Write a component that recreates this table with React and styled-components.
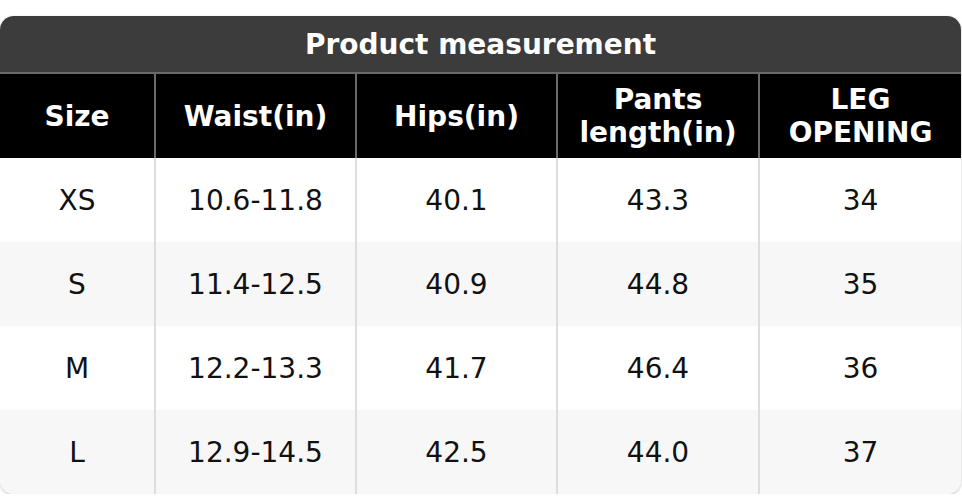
import React from "react";
import styled, { createGlobalStyle } from "styled-components";

const GlobalStyle = createGlobalStyle`
  body {
    margin: 0;
    background: #ffffff;
    font-family: "DejaVu Sans", "Liberation Sans", sans-serif;
  }
`;

const Card = styled.div`
  margin: 16px 1px 0 0;
  border-radius: 14px;
  overflow: hidden;
  background: #ffffff;
  box-shadow: 0 1px 3px rgba(0, 0, 0, 0.25);
`;

const Title = styled.div`
  height: 56px;
  display: flex;
  align-items: center;
  justify-content: center;
  background: #3c3c3c;
  color: #ffffff;
  font-weight: bold;
  font-size: 28px;
  border-bottom: 2px solid #6a6a6a;
`;

const Grid = styled.div`
  display: grid;
  grid-template-columns: 156px 201px 201px 202px 1fr;
`;

const HeadCell = styled.div`
  height: 84px;
  display: flex;
  align-items: center;
  justify-content: center;
  text-align: center;
  background: #000000;
  color: #ffffff;
  font-weight: bold;
  font-size: 28px;
  line-height: 33px;
  border-right: ${(p) => (p.$last ? "none" : "2px solid #6a6a6a")};
`;

const Cell = styled.div`
  height: 84px;
  display: flex;
  align-items: center;
  justify-content: center;
  background: ${(p) => (p.$alt ? "#f7f7f7" : "#ffffff")};
  color: #111111;
  font-size: 28px;
  border-right: ${(p) => (p.$last ? "none" : "2px solid #dddddd")};
`;

const headers = [
  ["Size"],
  ["Waist(in)"],
  ["Hips(in)"],
  ["Pants", "length(in)"],
  ["LEG", "OPENING"],
];

const rows = [
  ["XS", "10.6-11.8", "40.1", "43.3", "34"],
  ["S", "11.4-12.5", "40.9", "44.8", "35"],
  ["M", "12.2-13.3", "41.7", "46.4", "36"],
  ["L", "12.9-14.5", "42.5", "44.0", "37"],
];

export default function App() {
  return (
    <>
      <GlobalStyle />
      <Card>
        <Title>Product measurement</Title>
        <Grid>
          {headers.map((h, i) => (
            <HeadCell key={i} $last={i === headers.length - 1}>
              <div>
                {h.map((line, j) => (
                  <div key={j}>{line}</div>
                ))}
              </div>
            </HeadCell>
          ))}
          {rows.map((row, r) =>
            row.map((v, c) => (
              <Cell key={r + "-" + c} $alt={r % 2 === 1} $last={c === row.length - 1}>
                {v}
              </Cell>
            ))
          )}
        </Grid>
      </Card>
    </>
  );
}
